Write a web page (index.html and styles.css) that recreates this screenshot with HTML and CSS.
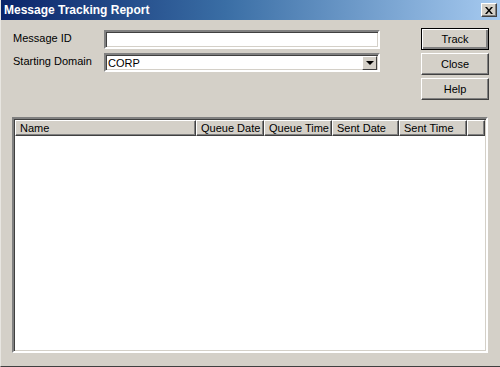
FILE: index.html
```html
<!doctype html>
<html>
<head>
	<title>Message Tracking Report</title>
	<link rel="stylesheet" href="styles.css">
</head>
<body>
	<div class="window">
		<div class="titlebar">
			<span class="title">Message Tracking Report</span>
			<span class="closebox">
				<svg width="8" height="7" viewBox="0 0 8 7"><path d="M0 0h2l2 2.5L6 0h2L5 3.5 8 7H6L4 4.5 2 7H0l3-3.5z" fill="#000"/></svg>
			</span>
		</div>
		<div class="body">
			<div class="top">
				<div class="fields">
					<div class="row">
						<label class="lbl" for="msgid">Message ID</label>
						<input class="field" type="text" id="msgid" value="">
					</div>
					<div class="row">
						<label class="lbl" for="domain">Starting Domain</label>
						<div class="field combo">
							<span class="val">CORP</span>
							<span class="drop"><i class="arrow"></i></span>
						</div>
					</div>
				</div>
				<div class="buttons">
					<button class="btn default">Track</button>
					<button class="btn">Close</button>
					<button class="btn">Help</button>
				</div>
			</div>
			<div class="list">
				<div class="head">
					<span class="col c-name">Name</span>
					<span class="col c-date">Queue Date</span>
					<span class="col c-date">Queue Time</span>
					<span class="col c-date2">Sent Date</span>
					<span class="col c-date">Sent Time</span>
					<span class="col c-rest"></span>
				</div>
				<div class="rows"></div>
			</div>
		</div>
	</div>
</body>
</html>
```

FILE: styles.css
```css
*{
	margin:0;
	padding:0;
	box-sizing:border-box;
}
body{
	background:#d4d0c8;
	font-family:"Liberation Sans", Arial, sans-serif;
	font-size:11px;
	color:#000;
}
.window{
	width:500px;
	height:367px;
	background:#d4d0c8;
	border-left:1px solid #e8e6e1;
	border-bottom:1px solid #404040;
	display:flex;
	flex-direction:column;
}
.titlebar{
	height:20px;
	background:linear-gradient(to right,#0a246a 0%,#3a6ea5 45%,#a6caf0 100%);
	display:flex;
	align-items:center;
	justify-content:space-between;
	padding:0 3px 0 3px;
}
.title{
	color:#fff;
	font-weight:bold;
	font-size:12px;
}
.closebox{
	width:16px;
	height:14px;
	background:#d4d0c8;
	border:1px solid;
	border-color:#fff #404040 #404040 #fff;
	box-shadow:inset -1px -1px 0 #808080;
	display:flex;
	align-items:center;
	justify-content:center;
}
.body{
	flex:1;
	padding:9px 11px 13px 11px;
	display:flex;
	flex-direction:column;
}
.top{
	display:flex;
	justify-content:space-between;
	height:87px;
}
.fields{
	display:flex;
	flex-direction:column;
	gap:4px;
	padding-top:1px;
}
.row{
	display:flex;
	align-items:flex-start;
}
.lbl{
	width:92px;
	padding:2px 0 0 1px;
	font-size:11px;
}
.field{
	width:276px;
	height:19px;
	background:#fff;
	border:2px solid;
	border-color:#808080 #fff #fff #808080;
	box-shadow:inset 1px 1px 0 #404040,inset -1px -1px 0 #d4d0c8;
	font-family:inherit;
	font-size:11px;
	outline:none;
}
.combo{
	display:flex;
	align-items:center;
	justify-content:space-between;
	padding:0 1px 0 2px;
}
.drop{
	width:15px;
	height:14px;
	background:#d4d0c8;
	border:1px solid;
	border-color:#fff #404040 #404040 #fff;
	display:flex;
	align-items:center;
	justify-content:center;
}
.arrow{
	width:0;
	height:0;
	border-left:4px solid transparent;
	border-right:4px solid transparent;
	border-top:4px solid #000;
}
.buttons{
	display:flex;
	flex-direction:column;
	gap:3px;
	margin-top:-1px;
}
.btn{
	width:68px;
	height:22px;
	background:#d4d0c8;
	border:1px solid;
	border-color:#fff #404040 #404040 #fff;
	box-shadow:inset -1px -1px 0 #808080;
	font-family:inherit;
	font-size:11px;
	color:#000;
}
.btn.default{
	border:1px solid #000;
	box-shadow:inset 1px 1px 0 #fff,inset -2px -2px 0 #808080;
}
.list{
	margin-top:1px;
	flex:1;
	width:476px;
	background:#fff;
	border:2px solid;
	border-color:#808080 #fff #fff #808080;
	box-shadow:inset 1px 1px 0 #404040,inset -1px -1px 0 #d4d0c8;
	padding:1px;
	display:flex;
	flex-direction:column;
}
.head{
	display:flex;
	height:16px;
}
.col{
	background:#d4d0c8;
	border:1px solid;
	border-color:#fff #404040 #404040 #fff;
	box-shadow:inset -1px -1px 0 #808080;
	padding:1px 0 0 4px;
	white-space:nowrap;
	overflow:hidden;
}
.c-name{ width:181px; }
.c-date{ width:68px; }
.c-date2{ width:67px; }
.c-rest{ flex:1; }
.rows{
	flex:1;
}
```
